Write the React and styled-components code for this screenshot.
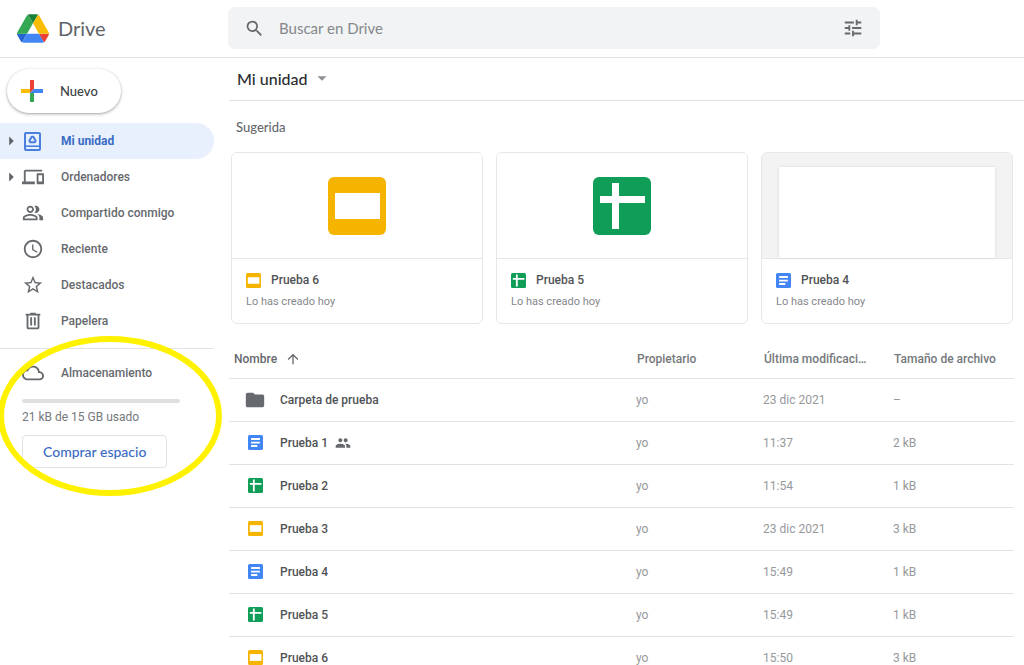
import React from 'react';
import styled, { createGlobalStyle } from 'styled-components';
import {
  MdAccessTime,
  MdArrowDropDown,
  MdArrowRight,
  MdArrowUpward,
  MdCloudQueue,
  MdDevices,
  MdFolder,
  MdOutlinePeopleAlt,
  MdPeople,
  MdSearch,
  MdStarBorder,
  MdTune,
} from 'react-icons/md';

const GlobalStyle = createGlobalStyle`
  * {
    box-sizing: border-box;
  }

  body {
    margin: 0;
    background: #fff;
    color: #66696d;
    font-family: Roboto, 'Liberation Sans', sans-serif;
    font-size: 12px;
  }

  button, input {
    font-family: inherit;
  }

  svg {
    display: block;
    flex-shrink: 0;
  }
`;

const brandFont = "Lato, 'Open Sans', sans-serif";

const Page = styled.div`
  display: flex;
  flex-direction: column;
  height: 100vh;
  overflow: hidden;
`;

const Header = styled.header`
  display: flex;
  flex-shrink: 0;
  align-items: center;
  height: 58px;
  padding-bottom: 1px;
  border-bottom: 1px solid #e2e3e5;
`;

const Brand = styled.a`
  display: flex;
  flex: 0 0 228px;
  align-items: center;
  gap: 9px;
  padding-left: 17px;
  color: #5f6368;
  font-family: ${brandFont};
  font-size: 20px;
  text-decoration: none;
`;

const SearchBar = styled.form`
  display: flex;
  flex: 1;
  align-items: center;
  max-width: 652px;
  height: 42px;
  padding: 0 16px;
  border-radius: 7px;
  background: #f1f3f4;
`;

const IconButton = styled.button`
  display: flex;
  padding: 0;
  border: 0;
  background: none;
  color: #66696d;
`;

const SearchInput = styled.input`
  flex: 1;
  min-width: 0;
  padding: 0 14px;
  border: 0;
  outline: 0;
  background: none;
  font-family: ${brandFont};
  font-size: 15px;

  &::placeholder {
    color: #85888c;
  }
`;

const Body = styled.div`
  display: flex;
  flex: 1;
  min-height: 0;
`;

const Sidebar = styled.aside`
  position: relative;
  z-index: 1;
  flex: 0 0 229px;
  padding: 11px 15px 0 0;
`;

const NewButton = styled.button`
  display: flex;
  align-items: center;
  gap: 17px;
  height: 44px;
  margin: 0 0 10px 7px;
  padding: 0 23px 0 14px;
  border: 0;
  border-radius: 22px;
  background: #fff;
  box-shadow: 0 1px 2px rgba(60, 64, 67, 0.3), 0 1px 3px 1px rgba(60, 64, 67, 0.15);
  color: #3c4043;
  font-family: ${brandFont};
  font-size: 13px;
  font-weight: 500;
`;

const NavItem = styled.a`
  display: flex;
  align-items: center;
  height: 36px;
  border-radius: 0 18px 18px 0;
  background: ${(props) => (props.$active ? '#e8f0fe' : 'transparent')};
  color: ${(props) => (props.$active ? '#3a6bc4' : '#66696d')};
  font-weight: ${(props) => (props.$active ? 700 : 500)};
  text-decoration: none;
`;

const Expander = styled.span`
  width: 22px;
  color: #5f6368;
`;

const NavLabel = styled.span`
  padding-left: 17px;
`;

const Storage = styled.section`
  position: relative;
  margin-top: 9px;
  padding-top: 6px;
  border-top: 1px solid #e2e3e5;
`;

const Meter = styled.div`
  height: 4px;
  margin: 8px 34px 0 22px;
  border-radius: 2px;
  background: #e0e0e0;
`;

const Usage = styled.p`
  margin: 6px 0 10px 22px;
  color: #75787c;
  line-height: 16px;
`;

const BuyButton = styled.button`
  height: 33px;
  margin-left: 22px;
  padding: 0 20px;
  border: 1px solid #e2e3e5;
  border-radius: 4px;
  background: #fff;
  color: #3a6bc4;
  font-family: ${brandFont};
  font-size: 14px;
  font-weight: 500;
`;

const Highlight = styled.svg`
  position: absolute;
  top: -14px;
  left: -3px;
  pointer-events: none;
`;

const Main = styled.main`
  flex: 1;
  min-width: 0;
`;

const Toolbar = styled.div`
  display: flex;
  align-items: center;
  height: 43px;
  padding: 0 0 2px 8px;
  border-bottom: 1px solid #e2e3e5;
`;

const FolderButton = styled.button`
  display: flex;
  align-items: center;
  gap: 3px;
  padding: 0;
  border: 0;
  background: none;
  color: #2b2c2e;
  font-family: ${brandFont};
  font-size: 16px;
  font-weight: 500;

  svg {
    color: #8e9195;
  }
`;

const SectionTitle = styled.h2`
  margin: 0;
  padding: 16px 0 15px 7px;
  font-family: ${brandFont};
  font-size: 13px;
  font-weight: 500;
  line-height: 20px;
`;

const Cards = styled.div`
  display: grid;
  grid-template-columns: repeat(3, 1fr);
  gap: 13px;
  padding: 0 11px 0 2px;
`;

const Card = styled.article`
  overflow: hidden;
  border: 1px solid #e6e7e8;
  border-radius: 6px;
`;

const Preview = styled.div`
  display: flex;
  align-items: center;
  justify-content: center;
  height: 106px;
  padding: ${(props) => (props.$page ? '14px 17px 0' : '0')};
  border-bottom: 1px solid #e6e7e8;
  background: ${(props) => (props.$page ? '#f3f3f3' : '#fff')};
`;

const Sheet = styled.div`
  align-self: stretch;
  flex: 1;
  background: #fff;
  box-shadow: 0 0 3px rgba(0, 0, 0, 0.12);
`;

const CardInfo = styled.div`
  padding: 11px 14px 13px;
`;

const CardName = styled.h3`
  display: flex;
  align-items: center;
  gap: 10px;
  margin: 0 0 4px;
  color: #505356;
  font-size: 12px;
  font-weight: 500;
  line-height: 20px;
`;

const CardNote = styled.p`
  margin: 0;
  color: #85888c;
  font-size: 11px;
  line-height: 16px;
`;

const Files = styled.table`
  width: calc(100% - 10px);
  margin-top: 16px;
  border-collapse: collapse;
  table-layout: fixed;
`;

const HeadCell = styled.th`
  width: ${(props) => props.$width || 'auto'};
  height: 38px;
  padding: 0 0 0 ${(props) => (props.$first ? '5px' : '1px')};
  border-bottom: 1px solid #e2e3e5;
  color: #75787c;
  font-weight: 500;
  text-align: left;
  white-space: nowrap;
`;

const SortButton = styled.button`
  display: flex;
  align-items: center;
  gap: 8px;
  padding: 0;
  border: 0;
  background: none;
  color: #66696d;
  font-size: 12px;
  font-weight: 500;
`;

const Cell = styled.td`
  height: 43px;
  padding: 0;
  border-bottom: 1px solid #e2e3e5;
  color: #96989b;
`;

const FileName = styled.div`
  display: flex;
  align-items: center;
  gap: 7px;
  padding-left: 15px;
  color: #505356;
  font-weight: 500;

  svg {
    color: #66696d;
  }
`;

const IconSlot = styled.span`
  display: flex;
  justify-content: center;
  width: 22px;
  margin-right: 7px;
`;

const DriveLogo = () => (
  <svg width="32" height="29" viewBox="0 0 87.3 78" aria-hidden="true">
    <path d="m6.6 66.85 3.85 6.65c.8 1.4 1.95 2.5 3.3 3.3l13.75-23.8h-27.5c0 1.55.4 3.1 1.2 4.5z" fill="#2465cf" />
    <path d="m43.65 25-13.75-23.8c-1.35.8-2.5 1.9-3.3 3.3l-25.4 44a9.06 9.06 0 0 0 -1.2 4.5h27.5z" fill="#34a853" />
    <path d="m73.55 76.8c1.35-.8 2.5-1.9 3.3-3.3l1.6-2.75 7.65-13.25c.8-1.4 1.2-2.95 1.2-4.5h-27.502l5.852 11.5z" fill="#ea4335" />
    <path d="m43.65 25 13.75-23.8c-1.35-.8-2.9-1.2-4.5-1.2h-18.5c-1.6 0-3.15.45-4.5 1.2z" fill="#188038" />
    <path d="m59.8 53h-32.3l-13.75 23.8c1.35.8 2.9 1.2 4.5 1.2h50.8c1.6 0 3.15-.45 4.5-1.2z" fill="#4285f4" />
    <path d="m73.4 26.5-12.7-22c-.8-1.4-1.95-2.5-3.3-3.3l-13.75 23.8 16.15 28h27.45c0-1.55-.4-3.1-1.2-4.5z" fill="#fbbc04" />
  </svg>
);

const PlusIcon = () => (
  <svg width="22" height="22" viewBox="0 0 22 22" aria-hidden="true">
    <path d="M9 0h4v9l-4 4z" fill="#ea4335" />
    <path d="M0 9h9v4H0z" fill="#fbbc04" />
    <path d="M13 9h9v4H9z" fill="#4285f4" />
    <path d="M9 13h4v9H9z" fill="#34a853" />
  </svg>
);

const MyDriveIcon = () => (
  <svg width="22" height="22" viewBox="0 0 22 22" fill="none" stroke="#4a7fe0" aria-hidden="true">
    <rect x="3" y="3" width="15" height="17" rx="1" strokeWidth="2" />
    <path d="M3 16.2h15" strokeWidth="1.6" />
    <path d="M9.7 6.7h1.6l2.3 4-.8 1.5H8.2l-.8-1.5z" strokeWidth="2" strokeLinejoin="round" />
  </svg>
);

const TrashIcon = () => (
  <svg width="22" height="22" viewBox="0 0 24 24" fill="currentColor" aria-hidden="true">
    <path d="M15 4V3H9v1H4v2h1v13c0 1.1.9 2 2 2h10c1.1 0 2-.9 2-2V6h1V4h-5zm2 15H7V6h10v13zM9 8h2v9H9zm4 0h2v9h-2z" />
  </svg>
);

const SlidesIcon = ({ size }) => (
  <svg width={size} height={size} viewBox="0 0 58 58" aria-hidden="true">
    <rect width="58" height="58" rx="6" fill="#f4b400" />
    <path d="M7 16h45v26H7z" fill="#fff" />
  </svg>
);

const SheetsIcon = ({ size }) => (
  <svg width={size} height={size} viewBox="0 0 58 58" aria-hidden="true">
    <rect width="58" height="58" rx="6" fill="#0f9d58" />
    <path d="M19 6h7v13h26v7H26v26h-7V26H7v-7h12z" fill="#fff" />
  </svg>
);

const DocsIcon = ({ size }) => (
  <svg width={size} height={size} viewBox="0 0 58 58" aria-hidden="true">
    <rect width="58" height="58" rx="6" fill="#4285f4" />
    <path d="M12 12h34v7H12zM12 26h34v7H12zM12 39h24v7H12z" fill="#fff" />
  </svg>
);

const fileIcons = {
  slides: SlidesIcon,
  sheets: SheetsIcon,
  docs: DocsIcon,
};

const FileIcon = ({ type, size = 15 }) => {
  if (type === 'folder') {
    return <MdFolder size={22} />;
  }
  const Icon = fileIcons[type];
  return <Icon size={size} />;
};

const navItems = [
  { label: 'Mi unidad', icon: MyDriveIcon, expandable: true, active: true },
  { label: 'Ordenadores', icon: MdDevices, expandable: true },
  { label: 'Compartido conmigo', icon: MdOutlinePeopleAlt },
  { label: 'Reciente', icon: MdAccessTime },
  { label: 'Destacados', icon: MdStarBorder },
  { label: 'Papelera', icon: TrashIcon },
];

const suggested = [
  { name: 'Prueba 6', type: 'slides' },
  { name: 'Prueba 5', type: 'sheets' },
  { name: 'Prueba 4', type: 'docs' },
];

const files = [
  { name: 'Carpeta de prueba', type: 'folder', modified: '23 dic 2021', size: '–' },
  { name: 'Prueba 1', type: 'docs', shared: true, modified: '11:37', size: '2 kB' },
  { name: 'Prueba 2', type: 'sheets', modified: '11:54', size: '1 kB' },
  { name: 'Prueba 3', type: 'slides', modified: '23 dic 2021', size: '3 kB' },
  { name: 'Prueba 4', type: 'docs', modified: '15:49', size: '1 kB' },
  { name: 'Prueba 5', type: 'sheets', modified: '15:49', size: '1 kB' },
  { name: 'Prueba 6', type: 'slides', modified: '15:50', size: '3 kB' },
];

const NavLink = ({ label, icon: Icon, expandable, active }) => (
  <NavItem href="#" $active={active}>
    <Expander>{expandable && <MdArrowRight size={22} />}</Expander>
    <Icon size={22} />
    <NavLabel>{label}</NavLabel>
  </NavItem>
);

const App = () => (
  <Page>
    <GlobalStyle />
    <Header>
      <Brand href="#">
        <DriveLogo />
        Drive
      </Brand>
      <SearchBar role="search">
        <IconButton type="button" aria-label="Buscar">
          <MdSearch size={21} />
        </IconButton>
        <SearchInput type="text" placeholder="Buscar en Drive" aria-label="Buscar en Drive" />
        <IconButton type="button" aria-label="Opciones de búsqueda">
          <MdTune size={22} />
        </IconButton>
      </SearchBar>
    </Header>
    <Body>
      <Sidebar>
        <NewButton type="button">
          <PlusIcon />
          Nuevo
        </NewButton>
        <nav>
          {navItems.map((item) => <NavLink key={item.label} {...item} />)}
        </nav>
        <Storage>
          <NavLink label="Almacenamiento" icon={MdCloudQueue} />
          <Meter />
          <Usage>21 kB de 15 GB usado</Usage>
          <BuyButton type="button">Comprar espacio</BuyButton>
          <Highlight width="226" height="162" viewBox="0 0 226 162" aria-hidden="true">
            <ellipse cx="113" cy="81" rx="109" ry="77" fill="none" stroke="#fff200" strokeWidth="6" />
          </Highlight>
        </Storage>
      </Sidebar>
      <Main>
        <Toolbar>
          <FolderButton type="button">
            Mi unidad
            <MdArrowDropDown size={22} />
          </FolderButton>
        </Toolbar>
        <SectionTitle>Sugerida</SectionTitle>
        <Cards>
          {suggested.map((file) => (
            <Card key={file.name}>
              <Preview $page={file.type === 'docs'}>
                {file.type === 'docs' ? <Sheet /> : <FileIcon type={file.type} size={58} />}
              </Preview>
              <CardInfo>
                <CardName>
                  <FileIcon type={file.type} />
                  {file.name}
                </CardName>
                <CardNote>Lo has creado hoy</CardNote>
              </CardInfo>
            </Card>
          ))}
        </Cards>
        <Files>
          <thead>
            <tr>
              <HeadCell scope="col" $first>
                <SortButton type="button">
                  Nombre
                  <MdArrowUpward size={16} />
                </SortButton>
              </HeadCell>
              <HeadCell scope="col" $width="127px">Propietario</HeadCell>
              <HeadCell scope="col" $width="130px">Última modificaci…</HeadCell>
              <HeadCell scope="col" $width="121px">Tamaño de archivo</HeadCell>
            </tr>
          </thead>
          <tbody>
            {files.map((file) => (
              <tr key={file.name}>
                <Cell>
                  <FileName>
                    <IconSlot><FileIcon type={file.type} /></IconSlot>
                    {file.name}
                    {file.shared && <MdPeople size={16} />}
                  </FileName>
                </Cell>
                <Cell>yo</Cell>
                <Cell>{file.modified}</Cell>
                <Cell>{file.size}</Cell>
              </tr>
            ))}
          </tbody>
        </Files>
      </Main>
    </Body>
  </Page>
);

export default App;
